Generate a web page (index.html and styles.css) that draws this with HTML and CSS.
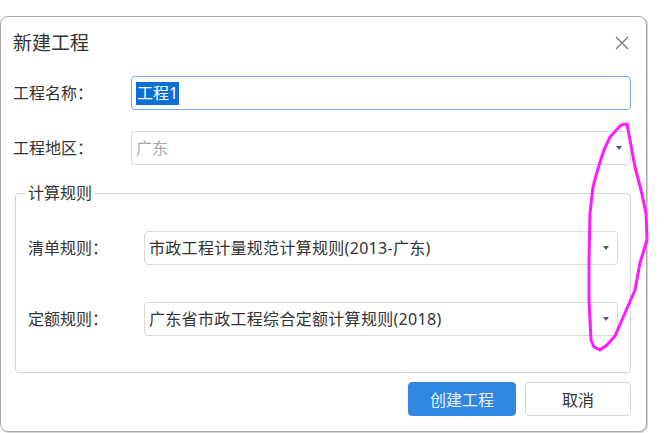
FILE: index.html
```html
<!DOCTYPE html>
<html>
<head>
  <meta charset="utf-8">
  <title>新建工程</title>
  <link rel="stylesheet" href="styles.css">
</head>
<body>
  <div class="dialog">
    <div class="dialog-header">
      <span class="dialog-title">新建工程</span>
      <svg class="close-icon" width="14" height="14" viewBox="0 0 14 14">
        <path d="M1 1 L13 13 M13 1 L1 13" stroke="#7a7a7a" stroke-width="1.4" fill="none"/>
      </svg>
    </div>

    <div class="form-row first">
      <label class="form-label">工程名称：</label>
      <div class="text-box focused"><span class="selected-text">工程1</span></div>
    </div>

    <div class="form-row second">
      <label class="form-label">工程地区：</label>
      <div class="text-box select disabled">
        <span>广东</span>
        <span class="arrow"></span>
      </div>
    </div>

    <fieldset class="rules">
      <legend>计算规则</legend>
      <div class="form-row rule-row">
        <label class="form-label">清单规则：</label>
        <div class="text-box select">
          <span class="value">市政工程计量规范计算规则(2013-广东)</span>
          <span class="arrow"></span>
        </div>
      </div>
      <div class="form-row rule-row">
        <label class="form-label">定额规则：</label>
        <div class="text-box select">
          <span class="value">广东省市政工程综合定额计算规则(2018)</span>
          <span class="arrow"></span>
        </div>
      </div>
    </fieldset>

    <div class="dialog-footer">
      <button class="btn primary">创建工程</button>
      <button class="btn">取消</button>
    </div>
  </div>

  <!-- hand drawn mark over the screenshot -->
  <svg class="annotation" width="670" height="433" viewBox="0 0 670 433">
    <path d="M621,125 L627,124 L630,140 L635,167 L641,190 L646,213 L647,240 L640,263 L635,290 L625,313 L615,336 L607,345 L600,350 L594,347 L591,340 L589,300 L589,260 L590,213 L593,187 L597,172 L600,162 L604,150 L610,137 Z"
          fill="none" stroke="#ff1aff" stroke-width="3" stroke-linejoin="round"/>
  </svg>
</body>
</html>
```

FILE: styles.css
```css
body {
  margin: 0;
  background-color: #fff;
  font-family: "Noto Sans", "Noto Sans CJK SC", sans-serif;
  color: #333;
  position: relative;
  width: 670px;
  height: 433px;
  overflow: hidden;
}

.dialog {
  box-sizing: border-box;
  margin-top: 16px;
  width: 647px;
  height: 416px;
  padding: 13px 15px 0 12px;
  border: 1px solid #a9a9a9;
  border-radius: 8px;
  box-shadow: 1px 1px 0 #d4d4d4;
  background-color: #fff;
}

.dialog-header {
  display: flex;
  align-items: center;
  justify-content: space-between;
  height: 26px;
}

.dialog-title {
  font-size: 19px;
  line-height: 26px;
  color: #333;
}

.close-icon {
  margin-right: 2px;
}

.form-row {
  display: flex;
  align-items: center;
  height: 34px;
}

.form-row.first {
  margin-top: 20px;
}

.form-row.second {
  margin-top: 21px;
}

.form-label {
  width: 118px;
  flex-shrink: 0;
  font-size: 16px;
  line-height: 20px;
  color: #333;
}

.text-box {
  box-sizing: border-box;
  flex: 1;
  height: 34px;
  display: flex;
  align-items: center;
  padding: 0 8px 0 4px;
  border: 1px solid #d9d9d9;
  border-radius: 4px;
  font-size: 16px;
  line-height: 20px;
  color: #333;
  white-space: nowrap;
}

.text-box.focused {
  border-color: #78aaea;
}

.selected-text {
  background-color: #0b6fd6;
  color: #fff;
  padding: 0 1px;
  line-height: 23px;
}

.select {
  justify-content: space-between;
}

.select .value {
  letter-spacing: 0.3px;
}

.disabled {
  color: #ababab;
}

.arrow {
  width: 0;
  height: 0;
  border-left: 3px solid transparent;
  border-right: 3px solid transparent;
  border-top: 4px solid #4d5d72;
}

.rules {
  box-sizing: border-box;
  margin: 18px 0 0 2px;
  padding: 0 12px 36px 12px;
  border: 1px solid #d4d4d4;
  border-radius: 4px;
  min-width: 0;
}

.rules legend {
  margin-left: -2px;
  padding: 0 2px;
  font-size: 16px;
  line-height: 20px;
  color: #333;
}

.rule-row {
  margin-top: 28px;
}

.rule-row + .rule-row {
  margin-top: 37px;
}

.rule-row .form-label {
  width: 116px;
}

.dialog-footer {
  display: flex;
  justify-content: flex-end;
  gap: 9px;
  margin-top: 9px;
}

.btn {
  box-sizing: border-box;
  height: 34px;
  width: 106px;
  border: 1px solid #d4d4d4;
  border-radius: 4px;
  background-color: #fff;
  color: #333;
  font-family: "Noto Sans", "Noto Sans CJK SC", sans-serif;
  font-size: 16px;
  cursor: pointer;
}

.btn.primary {
  width: 108px;
  background-color: #2f87e2;
  border-color: #2f87e2;
  color: #eaf3fd;
}

.annotation {
  position: absolute;
  left: 0;
  top: 0;
  pointer-events: none;
}
```
